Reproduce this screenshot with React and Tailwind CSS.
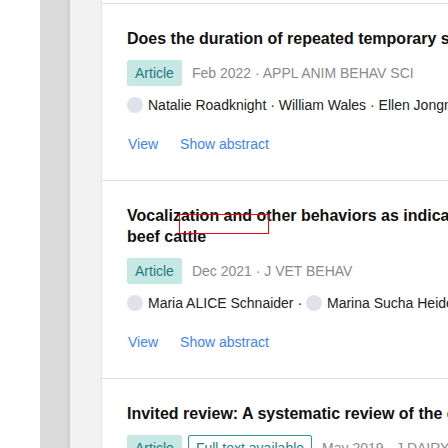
import React from "react";

const Avatar = () => (
  <span className="inline-block w-4 h-4 rounded-full bg-[#e1e1ec] mr-[5px] shrink-0" />
);

function Badge({ outline, children }) {
  return outline ? (
    <span className="h-[26px] px-[7px] border border-[#2a9893] rounded-[2px] text-[#1f7f82] text-[14px] leading-[24px] whitespace-nowrap">
      {children}
    </span>
  ) : (
    <span className="h-[26px] px-2 bg-[#c6e8e5] rounded-[2px] text-[#1f7a7e] text-[14px] leading-[26px] whitespace-nowrap">
      {children}
    </span>
  );
}

function Card({ title, badges, meta, authors }) {
  return (
    <div className="border-t border-[#e0e0e0] pt-[24px] pb-[26px] pl-[25px]">
      <div className="text-[16px] font-bold leading-[21px] text-[#111] whitespace-nowrap">
        {title}
      </div>
      <div className="mt-[11px] flex items-center h-[26px] gap-[6px]">
        {badges}
        <span className="ml-[4px] text-[14px] text-[#8a8a8a] whitespace-nowrap">{meta}</span>
      </div>
      <div className="mt-[9px] flex items-center h-5 text-[14px] text-[#222] whitespace-nowrap leading-5">
        {authors.map((a, i) => (
          <React.Fragment key={i}>
            {i > 0 && <span className="whitespace-pre">{" · "}</span>}
            <span className="inline-flex items-center">
              {a.avatar && <Avatar />}
              {a.name}
            </span>
          </React.Fragment>
        ))}
      </div>
      <div className="mt-[19px] flex h-5 gap-[22px] text-[14px] leading-5 text-[#4184f3] pl-px">
        <span>View</span>
        <span>Show abstract</span>
      </div>
    </div>
  );
}

export default function App() {
  return (
    <div
      className="relative w-[448px] h-[448px] overflow-hidden flex bg-white"
      style={{ fontFamily: '"Liberation Sans", Arial, sans-serif' }}
    >
      <div className="w-[40px] shrink-0 bg-white" />
      <div className="w-[27px] shrink-0 bg-[#dbdbdb]" />
      <div className="w-[3px] shrink-0 bg-[#d1d1d1]" />
      <div className="w-[32px] shrink-0 bg-[#f2f2f2] border-r border-[#e3e3e3]" />
      <div className="flex-1 min-w-0 overflow-hidden pt-[3px]">
        <Card
          title="Does the duration of repeated temporary separation affect welfare in dairy cow-calf contact systems?"
          badges={<Badge>Article</Badge>}
          meta="Feb 2022 · APPL ANIM BEHAV SCI"
          authors={[
            { name: "Natalie Roadknight", avatar: true },
            { name: "William Wales" },
            { name: "Ellen Jongman" },
          ]}
        />
        <Card
          title={
            <>
              Vocalization and other behaviors as indicators of emotional valence
              <br />
              beef cattle
            </>
          }
          badges={<Badge>Article</Badge>}
          meta="Dec 2021 · J VET BEHAV"
          authors={[
            { name: "Maria ALICE Schnaider", avatar: true },
            { name: "Marina Sucha Heidemann", avatar: true },
          ]}
        />
        <Card
          title="Invited review: A systematic review of the effects of early separation on dairy cow and calf health"
          badges={
            <>
              <Badge>Article</Badge>
              <Badge outline>Full text available</Badge>
            </>
          }
          meta="May 2019 · J DAIRY SCI"
          authors={[{ name: "Margit Bak Jensen", avatar: true }]}
        />
      </div>
      <div className="absolute left-[179px] top-[214px] w-[90px] h-[20px] border border-[#ff0000]" />
    </div>
  );
}
